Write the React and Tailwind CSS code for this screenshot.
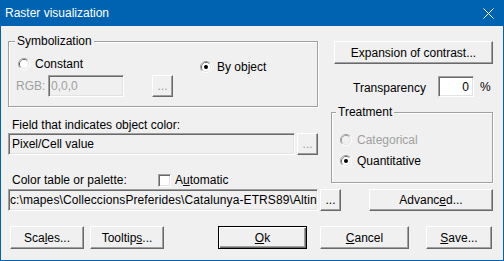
import React from "react";

const raised =
  "flex items-center justify-center bg-[#f0f0f0] border border-t-white border-l-white border-r-[#696969] border-b-[#696969] shadow-[inset_-1px_-1px_0_#a0a0a0] whitespace-nowrap";
const sunken =
  "flex items-center border border-t-[#a0a0a0] border-l-[#a0a0a0] border-r-white border-b-white shadow-[inset_1px_1px_0_#696969,inset_-1px_-1px_0_#e3e3e3] overflow-hidden whitespace-nowrap";
const etched = "min-w-0 border border-[#a0a0a0] shadow-[inset_1px_1px_0_#fff,1px_1px_0_#fff]";

function Radio({ checked, disabled }) {
  return (
    <svg width="12" height="12" viewBox="0 0 12 12" className="shrink-0">
      <path d="M2.11 9.89 A5.5 5.5 0 0 1 9.89 2.11" fill="none" stroke="#a0a0a0" />
      <path d="M9.89 2.11 A5.5 5.5 0 0 1 2.11 9.89" fill="none" stroke="#ffffff" />
      <path d="M2.82 9.18 A4.5 4.5 0 0 1 9.18 2.82" fill="none" stroke={disabled ? "#a0a0a0" : "#696969"} />
      <path d="M9.18 2.82 A4.5 4.5 0 0 1 2.82 9.18" fill="none" stroke="#e3e3e3" />
      <circle cx="6" cy="6" r="4" fill={disabled ? "#f0f0f0" : "#ffffff"} />
      {checked && <circle cx="6" cy="6" r="2" fill={disabled ? "#a0a0a0" : "#000000"} />}
    </svg>
  );
}

function Checkbox() {
  return (
    <div className="w-[13px] h-[13px] shrink-0 bg-white border border-t-[#a0a0a0] border-l-[#a0a0a0] border-r-white border-b-white shadow-[inset_1px_1px_0_#696969,inset_-1px_-1px_0_#e3e3e3]" />
  );
}

export default function App() {
  return (
    <div className="w-[504px] h-[261px] bg-[#0063b1] flex flex-col px-[1px] pb-[1px] text-[12px] leading-[14px] text-black font-['Liberation_Sans',Arial,sans-serif]">
      <div className="h-[26px] shrink-0 flex items-center justify-between pl-[4px] pr-[9px] text-white">
        <span>Raster visualization</span>
        <svg width="11" height="11" viewBox="0 0 11 11">
          <path d="M0.5 0.5 L10.5 10.5 M10.5 0.5 L0.5 10.5" stroke="#ffffff" strokeWidth="1" />
        </svg>
      </div>

      <div className="flex-1 bg-[#f0f0f0] flex flex-col">
        <div className="flex">
          {/* left column */}
          <div className="ml-[7px] w-[310px] flex flex-col">
            <fieldset className={`mt-[8px] h-[73px] ${etched}`}>
              <legend className="ml-[6px] px-[2px] leading-[14px] bg-[#f0f0f0]">Symbolization</legend>
              <div className="flex">
                <div className="w-[191px] flex flex-col">
                  <div className="mt-[9px] ml-[9px] h-[13px] flex items-center gap-[5px]">
                    <Radio />
                    <span>Constant</span>
                  </div>
                  <div className="mt-[5px] ml-[7px] h-[22px] flex items-center">
                    <span className="w-[32px] text-[#a0a0a0]">RGB:</span>
                    <div className={`${sunken} w-[76px] h-[22px] pl-[2px] text-[#a0a0a0]`}>0,0,0</div>
                    <div className={`${raised} ml-[28px] w-[21px] h-[22px] text-[#a0a0a0]`}>...</div>
                  </div>
                </div>
                <div className="pt-[12px]">
                  <div className="h-[13px] flex items-center gap-[5px]">
                    <Radio checked />
                    <span>By object</span>
                  </div>
                </div>
              </div>
            </fieldset>

            <div className="mt-[11px] ml-[4px] h-[14px]">Field that indicates object color:</div>
            <div className="mt-[1px] flex">
              <div className={`${sunken} w-[289px] h-[22px] pl-[3px]`}>Pixel/Cell value</div>
              <div className={`${raised} ml-[2px] w-[21px] h-[22px] text-[#a0a0a0]`}>...</div>
            </div>

            <div className="mt-[18px] h-[14px] flex items-center">
              <span className="ml-[4px] w-[146px]">Color table or palette:</span>
              <Checkbox />
              <span className="ml-[4px]">
                A<u>u</u>tomatic
              </span>
            </div>
          </div>

          {/* right column */}
          <div className="ml-[13px] w-[162px] flex flex-col">
            <div className={`${raised} mt-[15px] ml-[3px] w-[159px] h-[23px]`}>Expansion of contrast...</div>
            <div className="mt-[12px] h-[21px] flex items-center">
              <span className="ml-[22px] w-[85px] pt-[2px]">Transparency</span>
              <div className={`${sunken} w-[36px] h-[21px] bg-white justify-end pr-[4px]`}>0</div>
              <span className="ml-[6px]">%</span>
            </div>
            <fieldset className={`mt-[8px] h-[78px] ${etched}`}>
              <legend className="ml-[4px] px-[2px] leading-[14px] bg-[#f0f0f0]">Treatment</legend>
              <div className="flex flex-col pl-[8px]">
                <div className="mt-[14px] h-[13px] flex items-center gap-[5px] text-[#a0a0a0]">
                  <Radio disabled />
                  <span>Categorical</span>
                </div>
                <div className="mt-[8px] h-[13px] flex items-center gap-[5px]">
                  <Radio checked />
                  <span>Quantitative</span>
                </div>
              </div>
            </fieldset>
          </div>
        </div>

        <div className="mt-[2px] ml-[7px] h-[22px] flex">
          <div className={`${sunken} w-[310px] h-[22px] pl-[1px] tracking-[0.1px]`}>
            c:\mapes\ColleccionsPreferides\Catalunya-ETRS89\Altin
          </div>
          <div className={`${raised} ml-[2px] w-[21px] h-[22px]`}>...</div>
          <div className={`${raised} ml-[28px] w-[124px] h-[22px]`}>
            <span>
              Advanc<u>e</u>d...
            </span>
          </div>
        </div>

        <div className="mt-[15px] h-[23px] flex">
          <div className={`${raised} ml-[9px] w-[74px] h-[23px]`}>
            <span>
              Sca<u>l</u>es...
            </span>
          </div>
          <div className={`${raised} ml-[6px] w-[74px] h-[23px]`}>
            <span>
              Tooltip<u>s</u>...
            </span>
          </div>
          <div className="ml-[54px] w-[89px] h-[23px] flex items-center justify-center bg-[#f0f0f0] border border-black shadow-[inset_1px_1px_0_#fff,inset_-1px_-1px_0_#696969,inset_-2px_-2px_0_#a0a0a0]">
            <span>
              <u>O</u>k
            </span>
          </div>
          <div className={`${raised} ml-[13px] w-[89px] h-[23px]`}>
            <span>
              <u>C</u>ancel
            </span>
          </div>
          <div className={`${raised} ml-[17px] w-[66px] h-[23px]`}>
            <span>
              <u>S</u>ave...
            </span>
          </div>
        </div>
      </div>
    </div>
  );
}
